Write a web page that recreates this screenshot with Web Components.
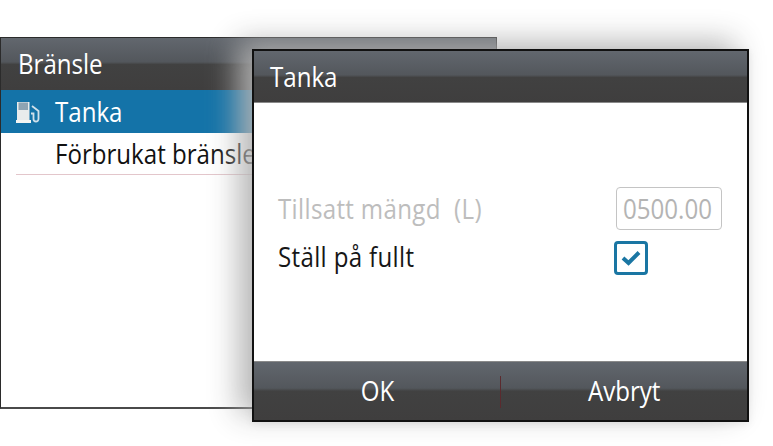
<!DOCTYPE html>
<html lang="sv">
<head>
<meta charset="utf-8">
<title>Bränsle</title>
<style>
html,body{margin:0;padding:0;background:#fff;overflow:hidden}
body{width:773px;height:446px;font-family:"Open Sans","Liberation Sans",sans-serif}
</style>
</head>
<body>
<template id="bar-tpl">
<style>
:host{display:flex;align-items:center;box-sizing:border-box;color:#fff;
background:linear-gradient(#62676e 0,#53575c 46%,#414141 51%,#3f3e3e 100%)}
</style>
<slot></slot>
</template>
<template id="text-tpl">
<style>
:host{display:inline-block;font-size:28px;font-weight:500;line-height:36px;white-space:nowrap;transform:translateY(-1px) scaleX(.86);transform-origin:left center}
:host(.mid){transform-origin:center}
</style>
<slot></slot>
</template>
<template id="menu-tpl">
<style>
:host{display:block;position:absolute;left:0;top:37px;width:497px;height:372px;box-sizing:border-box;
border:1px solid #2b2b2b;border-bottom:2px solid #4a4a4a;background:#fff;overflow:hidden}
.head{height:52px;padding-left:17px;justify-content:flex-start}
.row{height:43px;display:flex;align-items:center;padding-left:14px}
.sel{background:#1473a8;color:#fff}
.plain{color:#111;padding-left:54px;height:41px}
.rule{height:1px;background:#e3c6cb;margin-left:15px}
svg{width:26px;height:24px;margin-right:14px;flex:none}
</style>
<app-bar class="head"><app-text>Bränsle</app-text></app-bar>
<div class="row sel">
<svg viewBox="0 0 26 24"><path d="M2 2h12.500v19H2z" fill="#e9ecec"/><rect x="3.500" y="2.500" width="9.500" height="7.500" fill="#8ea4b3"/><path d="M1 20h15v3H1z" fill="#f5f5f2"/><path d="M17 6l6.500 5v8a2.500 2.500 0 0 1-5 0v-5.500h-2.500" fill="none" stroke="#cfe0ea" stroke-width="1.800"/></svg>
<app-text>Tanka</app-text>
</div>
<div class="row plain"><app-text>Förbrukat bränsle</app-text></div>
<div class="rule"></div>
</template>
<template id="dialog-tpl">
<style>
:host{display:flex;flex-direction:column;position:absolute;left:252px;top:49px;width:497px;height:373px;box-sizing:border-box;
border:2px solid #111;background:#fff;
box-shadow:-14px -8px 28px 0 rgba(180,180,180,.95),0 2px 8px rgba(0,0,0,.08)}
.head{height:52px;padding-left:16px;box-shadow:inset 0 -1px 0 #8a8a8a}
.body{flex:1;padding:84px 25px 0 24px;display:grid;grid-template-columns:1fr auto;align-content:start;row-gap:11px;align-items:center}
.muted{color:#bdbdbd;letter-spacing:.4px}
.dark{color:#161616;letter-spacing:.4px;margin-top:-2px}
.num{box-sizing:border-box;width:106px;height:43px;border:1px solid #c4c4c4;border-radius:4px;padding-left:6px;color:#b4b4b4;display:flex;align-items:center;overflow:hidden}
.check{box-sizing:border-box;width:34px;height:34px;margin-left:-2px;border:3px solid #1a76a3;border-radius:4px;justify-self:start;display:flex;align-items:center;justify-content:center}
.check svg{width:20px;height:16px}
.foot{height:59px;box-shadow:inset 0 1px 0 #8a8a8a}
.foot div{flex:1;display:flex;align-items:center;justify-content:center}
.foot i{width:1px;height:32px;background:#5b2a2e;margin-top:2px}
</style>
<app-bar class="head"><app-text>Tanka</app-text></app-bar>
<div class="body">
<app-text class="muted">Tillsatt mängd&nbsp; (L)</app-text>
<div class="num"><app-text>0500.00</app-text></div>
<app-text class="dark">Ställ på fullt</app-text>
<div class="check"><svg viewBox="0 0 20 16"><path d="M2 8 7.500 13 18 2.500" fill="none" stroke="#1a76a3" stroke-width="4"/></svg></div>
</div>
<app-bar class="foot">
<div><app-text class="mid">OK</app-text></div><i></i><div><app-text class="mid">Avbryt</app-text></div>
</app-bar>
</template>
<app-menu></app-menu>
<app-dialog></app-dialog>
<script>
function shadow(el,id){
  el.attachShadow({mode:"open"}).appendChild(document.getElementById(id).content.cloneNode(true));
}
class AppBar extends HTMLElement{constructor(){super();shadow(this,"bar-tpl");}}
class AppText extends HTMLElement{constructor(){super();shadow(this,"text-tpl");}}
class AppMenu extends HTMLElement{constructor(){super();shadow(this,"menu-tpl");}}
class AppDialog extends HTMLElement{constructor(){super();shadow(this,"dialog-tpl");}}
customElements.define("app-bar",AppBar);
customElements.define("app-text",AppText);
customElements.define("app-menu",AppMenu);
customElements.define("app-dialog",AppDialog);
</script>
</body>
</html>
